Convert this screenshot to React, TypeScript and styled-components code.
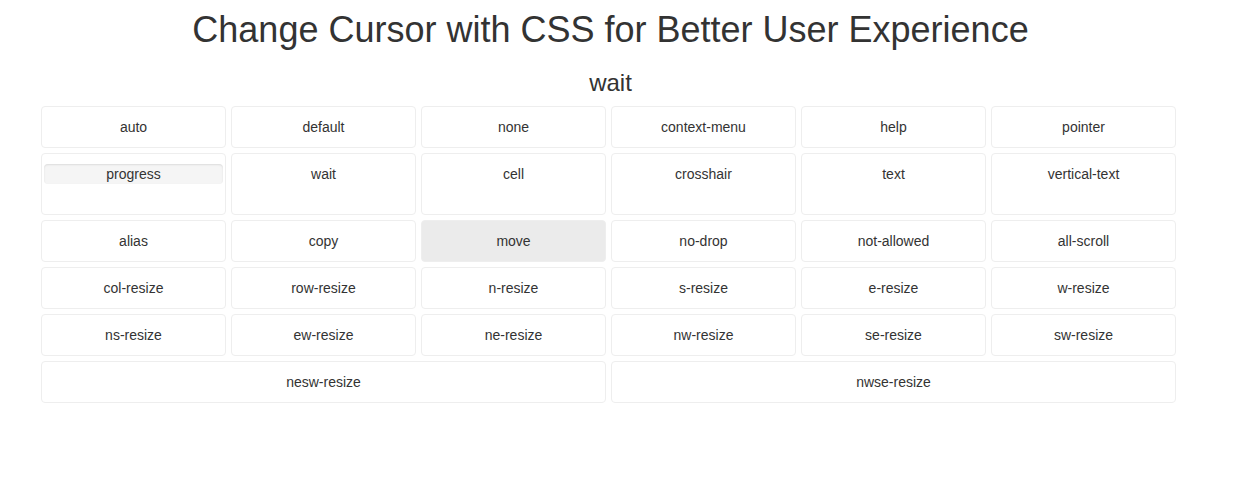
import React from "react";
import styled, { createGlobalStyle } from "styled-components";

const GlobalStyle = createGlobalStyle`
  html, body {
    margin: 0;
    padding: 0;
    background: #fff;
  }
  body {
    font-family: "Liberation Sans", Arial, Helvetica, sans-serif;
    font-size: 14px;
    line-height: 20px;
    color: #333;
  }
`;

const Page = styled.div`
  width: 1221px;
  padding-top: 10px;
`;

const Title = styled.h1`
  margin: 0 0 10px;
  font-size: 36px;
  font-weight: 500;
  line-height: 39.6px;
  text-align: center;
  color: #333;
`;

const Current = styled.h3`
  margin: 20px 0 10px;
  font-size: 24px;
  font-weight: 500;
  line-height: 26.4px;
  text-align: center;
  color: #333;
`;

const Grid = styled.div`
  display: grid;
  grid-template-columns: repeat(6, 185px);
  gap: 5px;
  margin-left: 41px;
  align-items: stretch;
`;

const Cell = styled.div<{ $wide?: boolean; $active?: boolean; $cursor: string }>`
  grid-column: ${(p) => (p.$wide ? "span 3" : "span 1")};
  box-sizing: border-box;
  padding: 10px 2px;
  border: 1px solid #eee;
  border-radius: 4px;
  background: ${(p) => (p.$active ? "#ebebeb" : "#fff")};
  text-align: center;
  cursor: ${(p) => p.$cursor};
`;

const ProgressBar = styled.div`
  height: 20px;
  margin-bottom: 20px;
  border-radius: 4px;
  background: #f5f5f5;
  box-shadow: inset 0 1px 2px rgba(0, 0, 0, 0.1);
  line-height: 20px;
`;

const cursors = [
  "auto", "default", "none", "context-menu", "help", "pointer",
  "progress", "wait", "cell", "crosshair", "text", "vertical-text",
  "alias", "copy", "move", "no-drop", "not-allowed", "all-scroll",
  "col-resize", "row-resize", "n-resize", "s-resize", "e-resize", "w-resize",
  "ns-resize", "ew-resize", "ne-resize", "nw-resize", "se-resize", "sw-resize",
  "nesw-resize", "nwse-resize",
];

export default function App() {
  return (
    <Page>
      <GlobalStyle />
      <Title>Change Cursor with CSS for Better User Experience</Title>
      <Current>wait</Current>
      <Grid>
        {cursors.map((c) => (
          <Cell
            key={c}
            $cursor={c}
            $wide={c === "nesw-resize" || c === "nwse-resize"}
            $active={c === "move"}
          >
            {c === "progress" ? <ProgressBar>{c}</ProgressBar> : c}
          </Cell>
        ))}
      </Grid>
    </Page>
  );
}
